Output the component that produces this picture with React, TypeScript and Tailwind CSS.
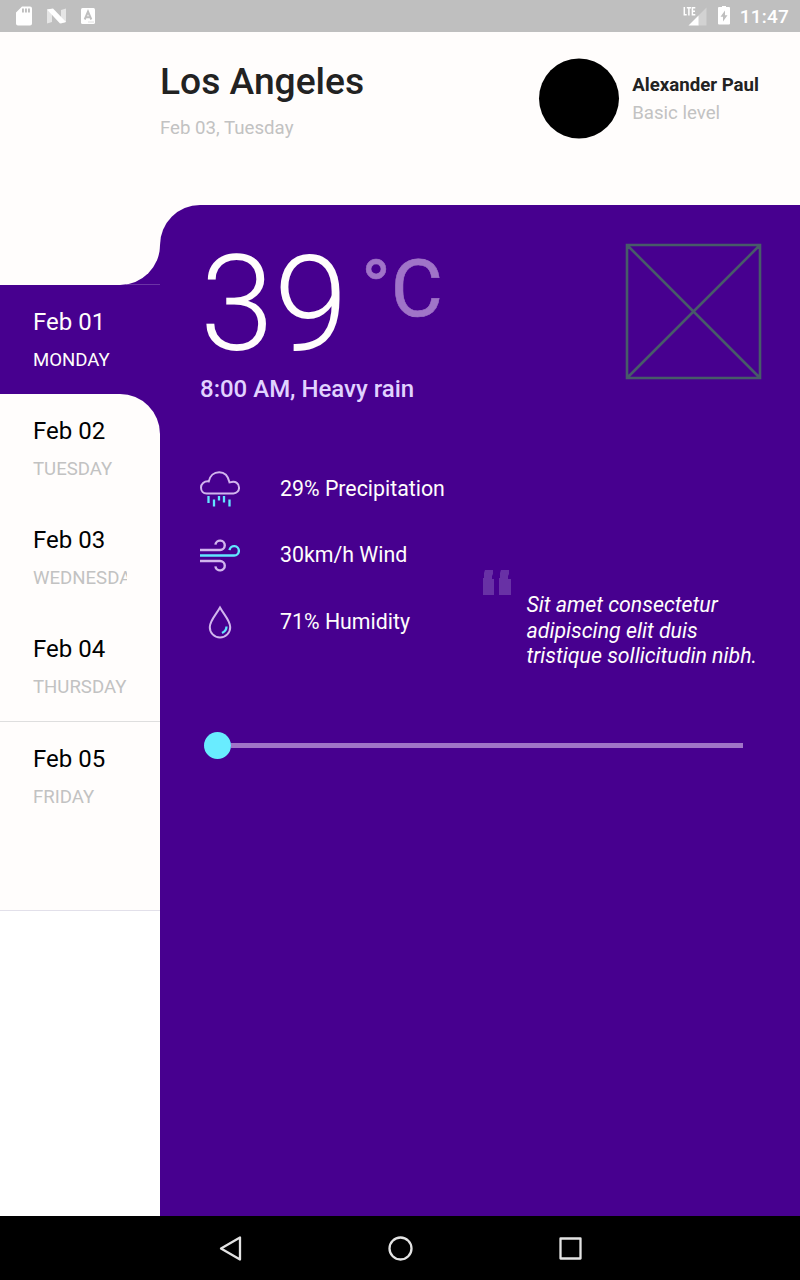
import React from 'react';

type Day = { date: string; name: string };

const upcoming: Day[] = [
  { date: 'Feb 02', name: 'TUESDAY' },
  { date: 'Feb 03', name: 'WEDNESDAY' },
  { date: 'Feb 04', name: 'THURSDAY' },
];

function DayLabel({ day, active = false }: { day: Day; active?: boolean }) {
  return (
    <div className="h-[109px] w-[127px] shrink-0 overflow-hidden pt-[23px] pl-[33px]">
      <div className={`text-[24px] leading-[29px] whitespace-nowrap ${active ? 'text-[#fffdfc]' : 'text-black'}`}>{day.date}</div>
      <div className={`mt-[12px] text-[18.6px] leading-[22px] whitespace-nowrap ${active ? 'text-[#fffdfc]' : 'text-[#c2c2c2]'}`}>
        {day.name}
      </div>
    </div>
  );
}

function StatusBar() {
  return (
    <div className="flex h-8 shrink-0 items-center justify-between bg-[#bfbfbf] text-white">
      <div className="flex items-center pl-4">
        <svg width="16" height="20" viewBox="0 0 16 20">
          <path fill="currentColor" fillRule="evenodd" d="M6 .5h8a2 2 0 0 1 2 2v15a2 2 0 0 1-2 2H2a2 2 0 0 1-2-2V6.500zM6 2.500v4h1.900v-4zM9 2.500v4h1.900v-4zM12 2.500v4h1.900v-4z" />
        </svg>
        <svg className="ml-[15px]" width="19" height="20" viewBox="0 0 19 20">
          <path fill="#fff" opacity=".6" d="M0 3.500L5 3v13L0 17.500zM14 4l5-1.500V16l-5 1.500z" />
          <path fill="#fff" d="M0 3.500L6 2.500 19 16l-6 1.500z" />
        </svg>
        <svg className="ml-[15px]" width="14" height="20" viewBox="0 0 14 20">
          <rect y="2" width="14" height="16" rx="1.500" fill="#fff" />
          <path d="M3.700 13.500L7 5.500l3.300 8M4.500 11.200h5" fill="none" stroke="#bfbfbf" strokeWidth="2" />
          <path d="M7.500 16h5" stroke="#bfbfbf" strokeDasharray="1 1" />
        </svg>
      </div>
      <div className="flex items-center pr-[11px]">
        <svg width="24" height="20" viewBox="0 0 24 20">
          <path fill="none" stroke="#fff" strokeWidth="1.500" d="M1.300 1v7.800h2.400M3.800 1.800h4.200M5.900 1.800V9.500M12.300 1.800H9.400v7h2.900M9.400 5.300h2.600" />
          <path fill="#fff" opacity=".3" d="M23.500 1.500v18H15V10z" />
          <path fill="#fff" d="M5.500 19.500L15.500 9.500v10z" />
        </svg>
        <svg className="ml-[11px]" width="12" height="20" viewBox="0 0 12 20">
          <path fill="#fff" fillRule="evenodd" d="M4 0h4v1h3a1 1 0 0 1 1 1v15.500a1 1 0 0 1-1 1H1a1 1 0 0 1-1-1V2a1 1 0 0 1 1-1h3zM7 4.500L2.500 10.800H5V15.500l4.500-6.300H7z" />
        </svg>
        <span className="ml-[10px] pt-px text-[19px] leading-8 font-medium tracking-[0.2px]">11:47</span>
      </div>
    </div>
  );
}

function RainIcon() {
  return (
    <svg width="40" height="40" viewBox="0 0 40 40" fill="none" strokeWidth="2">
      <path stroke="#d1b5ee" d="M6.500 24.500h27A5.600 5.600 0 0 0 39 18.500c0-4-3.500-6.500-7.500-5.500l-2 .3C28 6.500 24 3.300 19.200 3.300c-5.300 0-9.300 3.500-10.400 9.100C4 12 1 15 1 18.500c0 3.300 2.300 6 5.500 6z" />
      <path stroke="#62e6ff" strokeWidth="2.300" d="M8.500 27v7M14 30.500v7M19 27v4.500M24 27v6.500M29.500 30.500v7" />
    </svg>
  );
}

function WindIcon() {
  return (
    <svg width="40" height="40" viewBox="0 0 40 40" fill="none" strokeWidth="2.400">
      <path stroke="#d1b5ee" d="M0 15h20a4.700 4.700 0 1 0-4.600-5.300M0 26h20a4.700 4.700 0 1 1-4.600 5.300" />
      <path stroke="#62e6ff" d="M0 20.500h34.200a4.700 4.700 0 1 0-4.700-5.300" />
    </svg>
  );
}

function DropIcon() {
  return (
    <svg width="40" height="40" viewBox="0 0 40 40" fill="none" strokeWidth="2">
      <path stroke="#d1b5ee" d="M20 5.500c-3.500 6.500-10.200 13-10.200 19.500A10.200 10.200 0 0 0 20 35.500 10.200 10.200 0 0 0 30.200 25C30.200 18.500 23.500 12 20 5.500z" />
      <path stroke="#62e6ff" strokeWidth="2.300" d="M26.500 24.500c0 2.500-1.500 5-4.500 6.500" />
    </svg>
  );
}

function Metric({ icon, label }: { icon: React.ReactNode; label: string }) {
  return (
    <div className="flex h-10 items-center gap-10">
      {icon}
      <span className="text-[21.33px] leading-[26px] whitespace-nowrap text-[#fffdfc]">{label}</span>
    </div>
  );
}

function Sidebar() {
  return (
    <div className="flex w-40 shrink-0 flex-col bg-[#47008f]">
      <div className="relative h-20 shrink-0">
        <div className="h-full rounded-br-[40px] bg-[#fffdfc]" />
        <div className="absolute right-0 bottom-0 h-px w-[34px] bg-white/20" />
      </div>
      <DayLabel day={{ date: 'Feb 01', name: 'MONDAY' }} active />
      <div className="h-[328px] shrink-0 rounded-tr-[40px] border-b border-[#dedede] bg-[#fffdfc]">
        {upcoming.map((day) => (
          <DayLabel key={day.date} day={day} />
        ))}
      </div>
      <div className="h-[189px] shrink-0 border-b border-[#e2e0ea] bg-[#fffdfc]">
        <DayLabel day={{ date: 'Feb 05', name: 'FRIDAY' }} />
      </div>
      <div className="grow bg-white" />
    </div>
  );
}

function Forecast() {
  return (
    <main className="flex grow flex-col rounded-tl-[40px] bg-[#47008f] pl-10">
      <div className="flex h-[164px] justify-between pr-[38px]">
        <div className="flex text-[#fffdfc]">
          <span className="mt-[36px] h-[128px] text-[133.33px] leading-[128px] font-light">39</span>
          <span className="mt-[37px] ml-[13px] text-[80px] leading-[94px] text-[#a074c8] [-webkit-text-stroke:0.6px_#a074c8]">°C</span>
        </div>
        <svg className="mt-[38px]" width="137" height="137" viewBox="0 0 137 137" fill="none" stroke="#475b69" strokeWidth="2.600">
          <path d="M2 2h133v133H2zM2 2l133 133M135 2L2 135" />
        </svg>
      </div>
      <p className="mt-[6px] text-[24px] leading-[29px] font-medium text-[#e1d2ff]">8:00 AM, Heavy rain</p>
      <div className="mt-[65px] flex h-[210px]">
        <div className="flex w-[282px] shrink-0 flex-col gap-[26.4px]">
          <Metric icon={<RainIcon />} label="29% Precipitation" />
          <Metric icon={<WindIcon />} label="30km/h Wind" />
          <Metric icon={<DropIcon />} label="71% Humidity" />
        </div>
        <svg className="mt-[100px] shrink-0" width="30" height="26" viewBox="0 0 30 26">
          <path fill="#6831a5" d="M3 1h8v4L10 7v3h2v16H1V9h1V4zM19 1h8v4l-1 2v3h3v16H17V9h1V4z" />
        </svg>
        <p className="mt-[123px] ml-[14.500px] text-[21.33px] leading-[25.5px] whitespace-nowrap text-[#fffdfc] italic">
          Sit amet consectetur
          <br />
          adipiscing elit duis
          <br />
          tristique sollicitudin nibh.
        </p>
      </div>
      <div className="mt-[53px] ml-1 flex items-center">
        <div className="h-[27px] w-[26.5px] rounded-full bg-[#69ecff]" />
        <div className="h-[5.5px] w-[512.5px] bg-[#a074c8]" />
      </div>
    </main>
  );
}

export default function App() {
  return (
    <div className="flex h-[1280px] w-[800px] flex-col overflow-hidden bg-[#fffdfc] font-[Roboto,sans-serif]">
      <StatusBar />
      <header className="flex h-[173px] shrink-0 justify-between pr-[41px] pl-40">
        <div className="pt-[27px]">
          <h1 className="text-[37.2px] leading-[44px] font-medium text-[#222]">Los Angeles</h1>
          <p className="mt-[14px] text-[18.67px] leading-[22px] text-[#c2c2c2]">Feb 03, Tuesday</p>
        </div>
        <div className="flex">
          <div className="mt-[26px] size-20 translate-y-[0.5px] rounded-full bg-black" />
          <div className="ml-[13px] pt-[42px]">
            <p className="text-[18.67px] leading-[22px] font-bold text-[#222]">Alexander Paul</p>
            <p className="mt-[6px] text-[18.67px] leading-[22px] text-[#c2c2c2]">Basic level</p>
          </div>
        </div>
      </header>
      <div className="flex min-h-0 grow">
        <Sidebar />
        <Forecast />
      </div>
      <nav className="flex h-16 shrink-0 items-center justify-center gap-[138px] bg-black">
        <svg width="32" height="32" viewBox="0 0 32 32" fill="none" stroke="#e3e3e3" strokeWidth="2.300" strokeLinejoin="round">
          <path d="M7 16.500L26 5.500v22z" />
        </svg>
        <svg width="32" height="32" viewBox="0 0 32 32" fill="none" stroke="#e3e3e3" strokeWidth="2.300">
          <circle cx="16.500" cy="16.500" r="11" />
        </svg>
        <svg width="32" height="32" viewBox="0 0 32 32" fill="none" stroke="#e3e3e3" strokeWidth="2.300" strokeLinejoin="round">
          <path d="M6.500 6.500h20v20h-20z" />
        </svg>
      </nav>
    </div>
  );
}
